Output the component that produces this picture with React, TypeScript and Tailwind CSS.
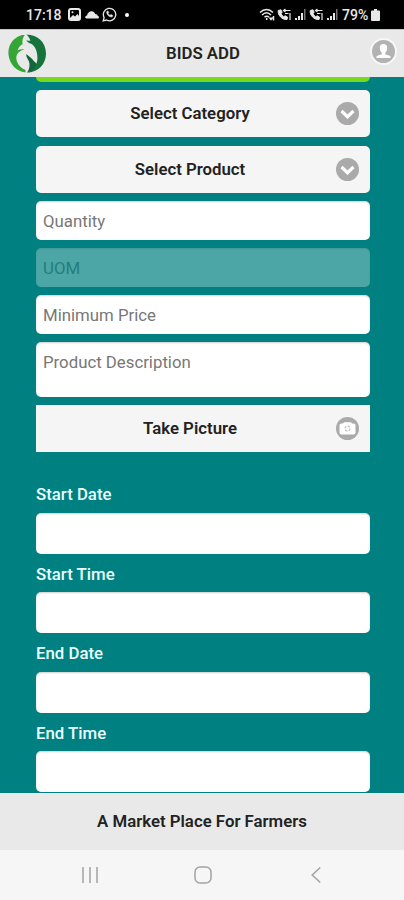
import type { ReactNode } from "react";

const dateFields = ["Start Date", "Start Time", "End Date", "End Time"];

function StatusBar() {
  return (
    <div className="h-[29px] shrink-0 bg-black text-[#e8e8e8] flex items-center justify-between pl-[26px] pr-[24px]">
      <div className="flex items-center">
        <span className="w-[37px] text-[14px] leading-none font-medium">17:18</span>
        <svg className="w-[13px] h-[13px] ml-[5px]" viewBox="0 0 13 13" fill="none">
          <rect x="1" y="1" width="11" height="11" rx="2" stroke="currentColor" strokeWidth="2" />
          <path d="M2 10l3-3 2 1.500L9.500 6 11 8v3H2z" fill="currentColor" />
          <circle cx="4.500" cy="4.300" r="1" fill="currentColor" />
        </svg>
        <svg className="w-[14px] h-[8px] ml-1" viewBox="0 0 14 8" fill="currentColor">
          <path d="M1.500 7.500C-.3 7.500-.3 5 2 4.500 2.500 2 4.300.300 6.500.300c2 0 3.200 1.200 3.700 2.700 1.500 0 2.200.8 2.400 1.700 1.900.5 1.700 2.800-.1 2.800z" />
        </svg>
        <svg className="w-[15px] h-[15px] ml-[3px]" viewBox="0 0 15 15" fill="none" stroke="currentColor">
          <path d="M1.200 13.800l.9-3.300A6.200 6.200 0 1 1 4.600 13z" strokeWidth="1.300" />
          <path d="M5 4.200c-1.500 2.500 2.500 6.600 5.300 5.600l.4-1.500-1.800-.8-.8.8C7 7.900 6.300 7 6 6.200l.7-.7L6 4z" fill="currentColor" strokeWidth=".5" />
        </svg>
        <span className="w-1 h-1 rounded-full bg-white ml-2" />
      </div>
      <div className="flex items-center">
        <WifiIcon />
        <CallIcon />
        <SignalIcon />
        <CallIcon />
        <SignalIcon />
        <span className="w-[28px] ml-[2px] text-[14px] leading-none font-medium">79%</span>
        <svg className="w-[9px] h-3 ml-[1px]" viewBox="0 0 9 12" fill="currentColor">
          <path d="M3 0h3v1.500h2q1 0 1 1V11q0 1-1 1H1q-1 0-1-1V2.500q0-1 1-1h2z" />
        </svg>
      </div>
    </div>
  );
}

function WifiIcon() {
  return (
    <svg className="w-[17px] h-[13px]" viewBox="0 0 17 13" fill="none" stroke="currentColor" strokeWidth="1.500">
      <path d="M1 4.500c4-4 9-4 13 0M3 7c3-3 6-3 9 0M5.500 9.300c1.500-1.500 3-1.500 4.500 0" />
      <path d="M7.700 10v2M10.500 9.500l1.500 2 1.500-2M14.500 8v4.500" />
    </svg>
  );
}

function CallIcon() {
  return (
    <svg className="w-[15px] h-[13px] ml-[1px]" viewBox="0 0 15 13" fill="none" stroke="currentColor">
      <path d="M1.200 2.500C.5 7 5 12 10 11.500l.7-2.200-2.500-1.500-1.500 1C5.500 8 4.500 6.800 4 5.500l1.200-1L4 1.800z" fill="currentColor" />
      <path d="M6.500 2.500h7M8.500 1L6.500 2.500l2 1.500M8 5.500h3.500M13 5v7" strokeWidth="1.200" />
    </svg>
  );
}

function SignalIcon() {
  return (
    <svg className="w-[11px] h-[11px] ml-[3px] mr-[2px]" viewBox="0 0 11 11" fill="currentColor">
      <path d="M0 9h2v2H0zM3 7h2v4H3zM6 4h2v7H6z" />
      <path d="M9 0h1.500v11H9z" opacity=".5" />
    </svg>
  );
}

function Logo() {
  return (
    <svg className="w-[38px] h-[39px]" viewBox="0 0 38 39">
      <path d="M17 .500C6 2-.500 10.500.500 20.500 1.500 30 8 37.500 17.500 38.500V36C11.500 33.500 8.300 28.500 8.300 23.500c.2-4 3-6.500 8-8-2.500-.5-4.500-.2-6.800 1 1.200-3.600 2.900-5.400 5.200-6.300-.9-3.700.3-6.700 2.300-9.700z" fill="#35a536" />
      <path d="M18.500.500C30 .500 38 9 38 19.500 38 30 30.500 37.800 20 38.700c7.500-4.200 10-10 9.300-16.700-.4-6-2.500-10.500-6.800-12.500-2-.5-3.300-1.800-4.300-3.500 1.400.8 2.800 1 4.200.8C21.500 4 20.300 2 18.500.500z" fill="#16733b" />
      <path d="M18.200 20c-.2 4.500 3.800 6.500 3.300 11 0 3-1 5.500-2.500 7.800 4.800-1 8-4.200 9.800-8.700-1.300-1.500-3.200-3-4.600-5-1.700-2.300-4-3-6-5.100z" fill="#14653a" />
    </svg>
  );
}

function Header() {
  return (
    <header className="h-12 shrink-0 bg-[#e9e9e9] border-t border-[#c4c4c4] flex items-center justify-between pl-[8px] pr-[7px]">
      <Logo />
      <h1 className="text-[16.800px] font-semibold text-[#222] pr-[10px]">BIDS ADD</h1>
      <div className="w-[27px] h-[27px] -mt-[5px] rounded-full bg-[#f8f8f8] flex items-center justify-center">
        <svg className="w-[23px] h-[23px]" viewBox="0 0 23 23">
          <circle cx="11.500" cy="11.500" r="11.500" fill="#b3b3b3" />
          <path d="M11.500 4c-2.500 0-4 1.600-3.700 4.500.1 2 .9 3.300 2 4.200v1.500l-4.500 1.600q-1 .4-1 2.200h14.400q0-1.800-1-2.200l-4.500-1.600v-1.500c1.100-.9 1.900-2.200 2-4.200C15.500 5.600 14 4 11.500 4z" fill="#fff" />
        </svg>
      </div>
    </header>
  );
}

function ActionRow({ label, icon, square }: { label: string; icon: ReactNode; square?: boolean }) {
  return (
    <button
      className={`relative w-full h-[47px] shrink-0 bg-[#f5f5f5] text-[16.800px] font-semibold text-[#222] flex items-center justify-center pr-[26px] ${
        square ? "" : "rounded-[5px]"
      }`}
    >
      {label}
      <span className="absolute right-[11px] top-[12px] w-[23px] h-[23px]">{icon}</span>
    </button>
  );
}

function ChevronIcon() {
  return (
    <svg className="w-[23px] h-[23px]" viewBox="0 0 23 23" fill="none">
      <circle cx="11.500" cy="11.500" r="11.500" fill="#aaa" />
      <path d="M5.500 9l6 5.700L17.500 9" stroke="#fff" strokeWidth="3.200" />
    </svg>
  );
}

function CameraIcon() {
  return (
    <svg className="w-[23px] h-[23px]" viewBox="0 0 23 23" fill="none">
      <circle cx="11.500" cy="11.500" r="11.500" fill="#aaa" />
      <path d="M5.500 6.500h1.500l1-1.300h7l1 1.300h1.500q2 0 2 1.500v7.500q0 2-2 2h-12q-2 0-2-2V8q0-1.500 2-1.500z" fill="#fff" />
      <circle cx="11.500" cy="11.500" r="2.500" stroke="#c4c4c4" strokeWidth="1.300" strokeDasharray="2.600 1.300" />
    </svg>
  );
}

const field =
  "block w-full shrink-0 rounded-[5px] bg-white px-[7px] text-[16.800px] text-[#333] placeholder:text-[#777] placeholder:opacity-100 outline-none shadow-[inset_0_1px_2px_rgba(0,0,0,0.2)]";

export default function App() {
  return (
    <div className="w-[404px] h-[900px] overflow-hidden flex flex-col bg-[#008080] font-[Roboto,sans-serif]">
      <StatusBar />
      <Header />
      <main className="flex-1 min-h-0 overflow-hidden pl-9 pr-[34px] flex flex-col">
        <div className="h-[5px] shrink-0 rounded-b-[5px] bg-[#78d81c] mb-2" />
        <div className="flex flex-col gap-2">
          <ActionRow label="Select Category" icon={<ChevronIcon />} />
          <div className="pt-[1px]">
            <ActionRow label="Select Product" icon={<ChevronIcon />} />
          </div>
          <input className={`${field} h-[39px]`} placeholder="Quantity" />
          <input className={`${field} h-[39px] opacity-30`} placeholder="UOM" disabled />
          <input className={`${field} h-[39px]`} placeholder="Minimum Price" />
          <textarea className={`${field} h-[55px] pt-[8px] resize-none`} placeholder="Product Description" />
          <ActionRow label="Take Picture" icon={<CameraIcon />} square />
        </div>
        <div className="pt-[29px]">
          {dateFields.map((name) => (
            <label key={name} className="block h-[79.500px]">
              <span className="block h-[31.500px] pt-[3px] text-[16.800px] leading-[20px] font-medium text-[#e9ffff]">{name}</span>
              <input className={`${field} h-[41px]`} />
            </label>
          ))}
        </div>
      </main>
      <footer className="h-[57px] shrink-0 bg-[#e9e9e9] flex items-center justify-center text-[16.800px] font-semibold text-[#222]">
        A Market Place For Farmers
      </footer>
      <nav className="h-[50px] shrink-0 bg-[#f6f6f6] flex items-center pl-[82px] text-[#a3a3a3]">
        <svg className="w-4 h-4" viewBox="0 0 16 16" stroke="currentColor" strokeWidth="1.500">
          <path d="M1 0v16M8 0v16M15 0v16" />
        </svg>
        <svg className="w-[18px] h-[18px] ml-24" viewBox="0 0 18 18" fill="none" stroke="currentColor" strokeWidth="1.500">
          <rect x="1" y="1" width="16" height="16" rx="5" />
        </svg>
        <svg className="w-[10px] h-4 ml-[99px]" viewBox="0 0 10 16" fill="none" stroke="currentColor" strokeWidth="1.500">
          <path d="M9.300.500L1.200 8l8.100 7.500" />
        </svg>
      </nav>
    </div>
  );
}
